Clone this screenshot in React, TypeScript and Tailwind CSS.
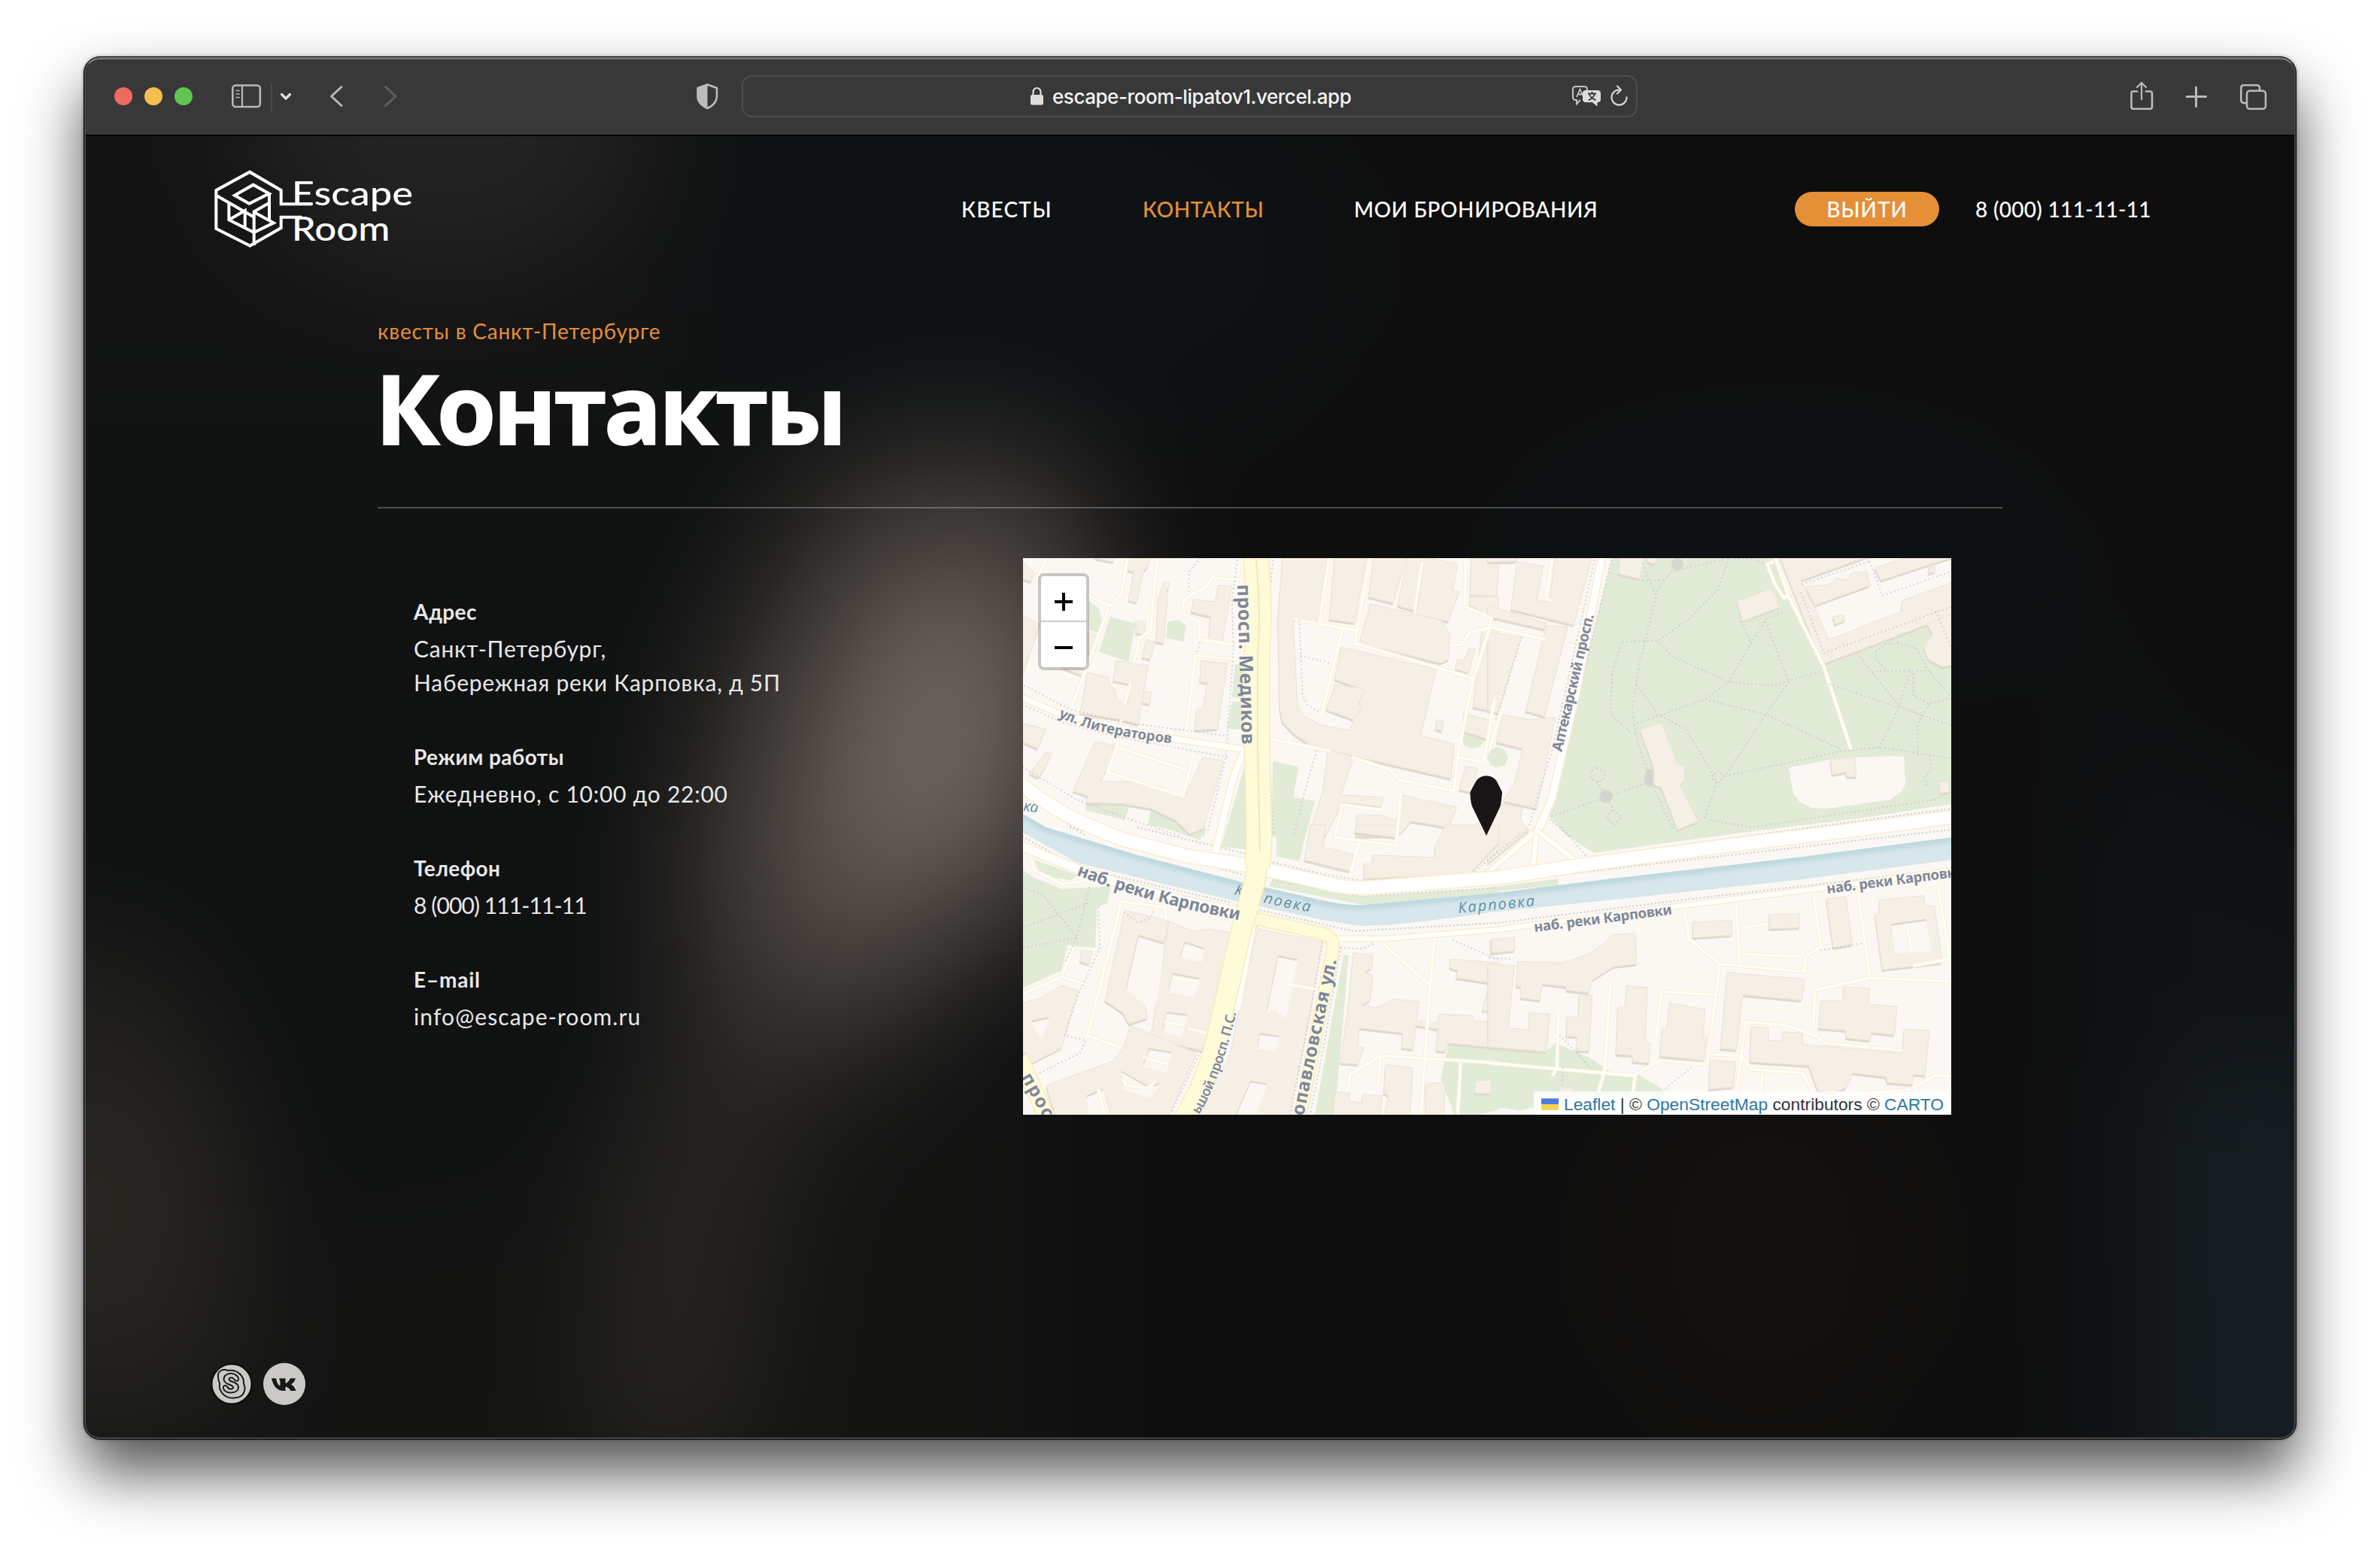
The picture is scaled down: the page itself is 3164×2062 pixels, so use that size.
import React from "react";

type Pt = string;

const BG = "#fbf8f4";
const BUILDING = "#f6efe6";
const GREEN = "#e1ebd6";

interface Tile {
  transform: string;
  greens: Pt[];
  clearings: Pt[];
  buildings: Pt[];
  courts: Pt[];
  roads: Pt[];
  dots: Pt[];
}

const northWest: Tile = {
  transform: "translate(-10 -12) scale(0.40816 0.33333)",
  greens: [
    "238,205 270,235 283,290 272,335 238,320",
    "308,270 390,298 368,450 272,410",
    "495,290 530,282 555,305 548,370 490,355",
    "715,460 740,460 745,600 705,590",
    "705,608 735,608 745,720 690,716",
    "838,845 922,868 905,990 975,1005 945,1145 835,1145",
    "745,870 760,1145 680,1145",
    "240,1000 372,1020 355,1080 225,1040",
    "440,1045 620,1110 615,1145 430,1100",
    "1450,735 1490,740 1535,755 1515,785 1488,797 1462,783",
  ],
  clearings: [],
  buildings: [
    "24,50 62,95 50,130 24,120",
    "24,265 80,300 30,480 24,500",
    "370,30 440,30 430,75 418,85 395,212 368,205 385,90 365,85",
    "250,30 322,30 320,52 270,40",
    "482,130 502,135 500,160 490,160 497,195 487,300 482,375 458,370 465,190 470,180",
    "392,285 425,290 418,340 392,335",
    "425,360 455,370 440,440 412,432",
    "660,145 705,148 675,365 628,360 635,270 572,250 580,200 650,210",
    "605,445 690,455 658,718 583,722 590,640 612,635 625,535 600,528",
    "328,445 432,465 400,700 345,680 210,655 235,492 300,510 310,545 325,560 330,605 365,615 378,540 318,525",
    "418,568 443,572 438,618 412,612",
    "258,768 333,785 278,925 400,930 480,950 550,990 610,828 678,845 612,1115 568,1135 520,1080 440,1035 350,1015 232,1012 235,985 187,965",
    "24,695 100,718 72,795 24,770",
    "100,808 118,815 95,875 75,912 45,895",
    "238,330 265,345 262,400 238,415",
    "145,470 225,480 220,505",
    "870,30 1015,30 985,290 915,275 905,290 918,620 940,665 990,700 1090,722 1135,560 1040,520 1060,390 1370,480 1320,745 1430,775 1418,915 1100,825 965,785 910,740 870,690 860,640 855,270",
    "1040,540 1138,558 1115,620 1130,630 1100,680 1012,640",
    "1040,30 1145,30 1105,295 1022,280",
    "1168,30 1275,30 1230,215 1150,190",
    "1278,30 1325,30 1298,245 1245,225",
    "1332,30 1440,60 1425,165 1445,170 1410,288 1308,260",
    "1155,218 1390,285 1415,345 1410,440 1385,455 1120,375",
    "1478,395 1498,398 1475,495 1432,478 1440,440 1462,440",
    "1485,30 1575,30 1568,188 1480,185",
    "1480,190 1575,190 1568,280 1480,225",
    "1520,318 1575,318 1568,650 1490,630",
    "1460,655 1550,685 1532,755 1455,725",
    "1372,680 1395,685 1390,725 1368,718",
    "1465,865 1505,875 1485,970 1445,960",
    "1018,800 1102,830 1060,980 1198,990 1190,1028 1065,1010 1010,1145 955,1145 1000,970",
    "1255,980 1438,1030 1410,1110 1290,1085 1245,1145 1108,1145 1112,1060 1190,1060 1240,1085",
  ],
  courts: [],
  roads: [
    "105,30 70,115",
    "365,30 345,180 305,230 180,640",
    "235,185 305,225",
    "462,30 440,325 405,355 385,455",
    "375,535 355,620",
    "345,680 330,790 300,890 545,985 590,770",
    "330,790 555,880",
    "738,125 640,112 620,155 565,185 545,215 550,260 598,290 600,360 735,385",
    "725,440 585,425 555,750",
    "1022,30 990,295",
    "1155,30 1105,380",
    "910,280 1110,325",
    "1065,320 995,665",
    "1105,375 1490,515",
    "1325,50 1300,245",
    "1465,30 1465,230 1550,275 1540,315 1480,330 1455,380 1415,385",
    "1545,315 1490,520 1440,830 1525,850 1560,600",
    "1440,830 1428,965 1250,920 1220,880 1095,830",
    "825,755 1025,805",
    "1255,975 1240,1180 1040,1150 1065,1020 1190,1040",
  ],
  dots: [
    "725,30 705,200 710,400 690,740 685,830 625,1130",
    "840,30 822,250 820,500 830,900 840,1145",
    "600,36 565,90 565,170",
    "30,545 180,640 350,690 690,745",
    "24,620 150,690 340,750 690,830",
    "925,285 935,580 950,620 990,650",
    "930,425 1025,455",
    "980,805 935,1000 905,1145",
    "600,375 590,415",
    "24,870 200,1000 400,1090 540,1145",
    "24,980 150,1080 230,1145",
  ],
};

const northEast: Tile = {
  transform: "translate(620 -12) scale(0.40816 0.33333)",
  greens: [
    "400,30 925,30 1085,465 1430,300 1440,340 1520,480 1520,1015 1200,1075 830,1130 340,1212 250,1140 190,1060",
    "27,788 48,798 62,830 50,862 27,872 5,862 -8,830 5,800",
  ],
  clearings: [
    "975,872 1130,835 1300,826 1350,828 1356,935 1340,970 1305,1000 1100,1035 1050,1032 1010,1008 990,975",
    "1060,235 1345,160 1345,245 1100,362",
  ],
  buildings: [
    "1110,843 1165,830 1190,830 1195,908 1165,908 1160,890 1117,900",
    "490,720 560,692 610,850 635,870 635,925 620,940 680,1085 612,1120 560,950 535,940 535,870",
    "805,208 920,157 945,232 825,288",
    "425,30 505,30 490,120 422,98",
    "510,30 545,30 538,60 515,50",
    "945,30 1235,30 1015,125 1060,235 1105,362 1340,250 1345,205 1515,130 1515,262 1430,298 1085,460",
    "1060,225 1240,145 1230,90 1180,95 1165,125 1130,115 1110,140 1030,150",
    "1255,75 1370,30 1515,30 1275,125",
    "1430,75 1450,70 1452,90 1430,98",
    "1118,270 1155,262 1158,285 1125,300",
    "1425,300 1515,255 1515,462 1475,470 1430,440 1415,390 1445,340",
    "1465,930 1495,925 1500,970 1468,972",
    "90,50 175,68 155,205 195,212 215,30 335,30 275,303 70,240",
    "-5,225 185,295 180,320 -5,268",
    "-5,30 95,30 85,50 -5,52",
    "185,305 255,312 180,668 118,645",
    "-5,330 103,352 30,655 -5,645",
    "45,660 130,680 215,670 155,1035 45,1005 80,940 108,795 22,770",
    "-5,1010 110,1030 100,1080 130,1120 -5,1255",
  ],
  courts: [],
  roads: [
    "205,30 185,200 205,205",
    "0,310 180,360",
    "250,380 290,390",
    "290,230 320,235",
    "0,800 40,640",
    "925,50 905,60 930,140 960,195 975,185",
    "930,30 975,190 1090,470 1178,800",
  ],
  dots: [
    "345,30 205,800 130,1100",
    "400,30 300,540 190,1070 260,1145",
    "105,352 20,680",
    "545,180 490,450 465,640 480,760 530,940 600,1120",
    "500,60 540,180 590,90 780,36 860,40 900,60",
    "500,125 570,125",
    "780,40 745,160 650,280 550,365 430,370 400,500 395,660 465,735",
    "550,370 600,430 780,530 920,545 1075,490",
    "480,540 550,660 640,720 720,880 740,930 700,1080",
    "470,700 700,600 780,530 850,380 900,280 960,250",
    "820,290 850,370",
    "900,290 975,530 900,660 770,900",
    "770,905 1150,805 1270,790 1510,835",
    "705,600 900,660 1150,800",
    "1110,540 1510,705",
    "1200,420 1330,620 1410,665",
    "1380,500 1380,580 1430,615 1510,595",
    "1330,375 1290,378 1258,410 1265,450 1300,485 1430,485",
    "1330,375 1390,395 1430,485 1510,600",
    "1370,490 1330,640 1270,790",
    "1430,620 1395,700 1395,820",
    "1435,825 1440,880 1415,910 1425,940",
    "1235,490 1300,485",
    "720,1080 850,1110 1450,1000 1510,960",
    "205,1065 520,930",
    "352,872 375,885 375,915 352,930 330,915 330,885 352,872 ",
    "352,930 380,988 405,1040 430,1070 405,1100 380,1070 405,1040",
    "745,885 765,905 745,935 722,910 745,885",
    "1015,175 1090,415 1515,225",
    "1235,36 1280,185 1515,85",
    "1020,140 1235,50",
    "1455,250 1510,410",
  ],
};

const southWest: Tile = {
  transform: "translate(-10 358) scale(0.40816 0.33333)",
  greens: [
    "24,170 60,200 150,245 310,235 300,300 265,320 260,480 170,470 150,570 24,640",
    "60,130 110,150 200,190 180,210 120,200 80,180",
    "1068,510 1085,510 1040,1150 975,1150",
    "1410,870 1575,880 1575,1125 1500,1150 1430,1150 1385,1000",
    "850,0 950,0 925,135 850,115",
    "688,0 750,0 755,88 670,78",
    "480,0 620,0 600,50",
    "840,205 1120,275 1575,240 1575,260 1130,308 825,235",
  ],
  clearings: [],
  buildings: [
    "500,375 580,415 630,405 700,420 620,895 440,840",
    "355,330 500,372 485,460 400,430 360,640 420,700 430,760 370,785 350,740 292,690",
    "790,405 1000,455 955,780 890,1150 595,1150 700,900 740,650",
    "150,630 205,650 150,880 45,945 24,900 24,700 85,680",
    "375,790 590,900 550,1010 500,1150 130,1150 100,1030 210,980 320,930 350,880",
    "215,490 250,495 240,545 210,535",
    "1100,500 1165,510 1160,560 1135,580 1165,590 1155,690 1128,710 1175,720 1230,685 1315,695 1305,770 1375,780 1380,745 1490,750 1495,770 1575,780 1575,880 1410,860 1400,895 1370,890 1375,805 1305,790 1295,885 1258,880 1260,820 1120,800 1115,870 1135,880 1115,945 1058,940 1085,700",
    "1415,525 1575,540 1575,735 1520,730 1545,620 1435,600 1440,570 1415,560",
    "1545,450 1575,450 1575,500 1548,500",
    "1205,945 1295,960 1285,1150 1200,1150 1215,1070 1200,1060",
    "1335,1020 1400,1020 1395,1150 1335,1150",
    "1040,1055 1090,1060 1085,1090 1130,1100 1130,1065 1195,1070 1190,1150 1035,1150",
    "1500,1010 1550,1010 1548,1060 1495,1060",
    "960,-10 1010,-10 1000,80 1045,90 1100,110 1090,175 990,145 940,130",
    "1110,-10 1245,-10 1240,40 1105,20",
    "1165,110 1368,120 1365,80 1400,-10 1575,-10 1575,60 1480,185 1135,205 1135,145 1160,145",
  ],
  courts: [
    "400,430 485,460 460,690 430,720 420,700 360,640",
    "550,455 615,480 605,530 538,512",
    "510,580 600,600 580,670 498,650",
    "490,735 560,745 540,830 480,810",
    "855,510 918,525 880,755 845,720 818,730",
    "795,820 858,830 848,885 788,875",
    "765,1010 818,1020 780,1150 715,1150",
    "50,770 110,755 85,835",
    "435,880 508,895 490,970 415,945",
    "345,970 430,1030 470,1020 440,1070 350,1040",
    "230,1070 285,1040 310,1150 240,1150",
  ],
  roads: [
    "490,370 490,320 345,295 235,830 345,880",
    "24,665 150,595 190,480",
    "150,595 235,630",
    "1190,455 1350,630",
    "1365,450 1350,630 1320,1150",
    "1190,910 1575,940",
    "1190,910 1090,985 1085,1030",
    "1190,910 1180,1030",
    "1450,940 1440,1150",
    "1120,60 1085,215",
    "1040,40 1230,70",
    "50,110 60,170 150,225 215,215",
    "415,915 495,945",
    "515,600 590,615",
    "485,775 550,790",
    "620,820 560,800",
    "880,625 980,645",
    "270,1045 290,1140",
    "350,1000 360,1030 430,1040 455,1015",
  ],
  dots: [
    "24,240 90,270 200,440 160,540",
    "240,240 200,440 24,480",
    "24,400 240,300",
    "270,320 275,480 200,680 160,830 230,850 210,900 70,985",
    "1000,460 960,740 895,1150",
    "1060,480 1010,830 960,1150",
    "785,400 700,730 600,900 510,1130",
    "355,340 400,380 440,360 450,330",
    "1060,480 1130,485 1170,460",
    "1425,450 1575,530",
    "840,140 1000,185 1160,220 1470,205 1575,90",
    "840,210 1120,275 1575,240",
    "30,900 120,1140",
  ],
};

const southEast: Tile = {
  transform: "translate(620 358) scale(0.40816 0.33333)",
  greens: [
    "-5,875 180,900 215,860 330,920 400,980 490,990 560,1040 575,1070 145,1070 145,1115 100,1130 40,1118 -5,1130",
    "-5,240 225,205 225,230 -5,258",
  ],
  clearings: [],
  buildings: [
    "8,445 82,440 82,492 8,500",
    "-5,545 82,550 62,800 128,808 130,738 198,745 185,895 -5,875",
    "92,535 240,540 330,500 390,445 400,428 475,422 480,545 405,555 335,610 325,660 252,650 250,635 172,625 165,690 102,680 102,635 88,632",
    "292,672 335,668 325,892 282,890 285,835 250,832 252,758 290,755",
    "447,632 515,638 508,855 523,860 520,940 467,935 465,910 412,905 418,715 442,715",
    "588,700 702,725 697,830 708,835 698,930 555,912 562,805 578,800",
    "662,378 790,370 790,430 662,440",
    "910,348 1010,345 1010,400 912,405",
    "1097,285 1162,275 1182,468 1120,480",
    "1270,290 1415,272 1420,312 1450,315 1475,540 1280,568 1255,345 1270,345",
    "775,578 1027,605 1017,690 825,668 805,888 752,882",
    "852,795 910,800 910,850 955,850 955,815 1020,820 1020,865 1345,900 1350,805 1433,810 1420,990 1380,985 1378,1025 1295,1018 1290,995 1185,980 1160,1040 1120,1058 1070,1050 1040,950 848,935",
    "1155,635 1238,642 1235,705 1328,715 1320,828 1245,818 1240,850 1162,840 1160,810 1072,802 1080,690 1150,692",
    "718,928 803,935 795,1035 715,1045",
    "230,1035 272,1040 270,1070 228,1070",
  ],
  courts: ["1308,385 1422,365 1440,485 1320,495"],
  roads: [
    "635,330 650,445 750,545 710,945 555,930 470,990 0,940",
    "805,305 815,545",
    "820,400 905,385",
    "820,505 1010,515",
    "750,545 1025,575 1030,515 1080,475 1055,265",
    "1200,255 1240,600 1515,615",
    "1240,600 1060,650 1055,795",
    "1460,225 1500,525 1380,552",
    "1360,385 1375,490",
    "560,655 735,668",
    "560,655 545,830",
    "720,905 820,910 805,1055",
    "820,910 835,775 970,790 1060,830 1095,860 1345,890",
    "820,910 855,965 1020,980 1050,1050",
    "890,980 885,1055",
    "225,735 220,960 205,990",
    "395,620 375,975 355,1055",
    "475,990 468,1055",
    "1210,1060 1370,1045 1450,990 1515,990",
  ],
  dots: ["230,830 330,960", "240,960 235,1040", "575,1040 660,955", "1080,490 1215,462", "0,520 70,525", "-5,130 130,0", "235,0 320,120"],
};

const tiles = [northWest, northEast, southWest, southEast];

const NS = { vectorEffect: "non-scaling-stroke" as const };

const RIVER =
  "M-2,339 L31,358 L153,395 L292,431 L398,455 Q430,462 451,461 L630,445 L783,426 L1028,398 L1236,371 L1236,401 L1028,428 L824,450 L620,471 Q480,492 440,488 L398,481 L292,458 L194,435 L72,405 L-2,364 Z";
const RIVER_TOP = "M-2,341 L31,360 L153,397 L292,433 L398,457 Q430,464 451,463 L630,447 L783,428 L1028,400 L1236,373";
const EMBANKMENT =
  "M-4,298 Q40,340 133,374 L218,396 L296,408 L398,431 Q430,440 460,438 L630,425 L742,408 L946,381 L1069,366 L1238,344";

interface RoadProps {
  d: string;
  w: number;
  fill?: string;
  casing?: string;
}

function Road({ d, w, fill = "#ffffff", casing = "#fbedcd" }: RoadProps) {
  return (
    <g fill="none" strokeLinejoin="round">
      <path d={d} stroke={casing} strokeWidth={w + 3} />
      <path d={d} stroke={fill} strokeWidth={w} />
    </g>
  );
}

function CityMap() {
  return (
    <svg viewBox="0 0 1234 740" className="block h-[740px] w-[1234px]">
      <defs>
        <path id="lit" d="M47,211 Q100,236 205,247" />
        <path id="nab" d="M71,421 Q160,457 292,482" />
        <path id="bolsh" d="M234,740 Q264,690 284,602" />
        <path id="petr" d="M373,742 L392,650 L418,530" />
        <path id="kar1" d="M280,447 Q330,462 385,471" />
        <filter id="soft" x="-5%" y="-20%" width="110%" height="140%">
          <feGaussianBlur stdDeviation="3" />
        </filter>
        <clipPath id="riverClip">
          <path d={RIVER} />
        </clipPath>
      </defs>
      <rect width="1234" height="740" fill={BG} />
      {tiles.map((t) => (
        <g key={t.transform} transform={t.transform}>
          {t.greens.map((p) => (
            <polygon key={p} points={p} fill={GREEN} />
          ))}
          {t.clearings.map((p) => (
            <polygon key={p} points={p} fill={BG} />
          ))}
        </g>
      ))}
      <g fill="#d3d8cd">
        <circle cx="775" cy="317" r="9" />
        <circle cx="870" cy="8" r="8" />
        <ellipse cx="833" cy="292" rx="7" ry="12" />
      </g>
      <path d={RIVER} fill="#d7e7ec" />
      <g clipPath="url(#riverClip)">
        <path d={RIVER_TOP} fill="none" stroke="#b9d5de" strokeWidth="8" filter="url(#soft)" />
      </g>
      {tiles.map((t) => (
        <g key={t.transform} transform={t.transform}>
          <g fill="#e0d9ce" transform="translate(-2 9)">
            {t.buildings.map((p) => (
              <polygon key={p} points={p} />
            ))}
          </g>
          <g fill={BUILDING} stroke="#ebe3d8" strokeWidth="1">
            {t.buildings.map((p) => (
              <polygon key={p} points={p} style={NS} />
            ))}
          </g>
          {t.courts.map((p) => (
            <g key={p}>
              <polygon points={p} fill="#e0d9ce" />
              <polygon points={p} fill={BG} transform="translate(1 8)" />
            </g>
          ))}
        </g>
      ))}
      {tiles.map((t) => (
        <g key={t.transform} transform={t.transform} fill="none" strokeLinejoin="round">
          {t.roads.map((p) => (
            <polyline key={p} points={p} stroke="#fbf0d8" strokeWidth="5.5" style={NS} />
          ))}
          {t.roads.map((p) => (
            <polyline key={p} points={p} stroke="#fffef8" strokeWidth="3.4" style={NS} />
          ))}
          {t.dots.map((p) => (
            <polyline key={p} points={p} stroke="#c9cbd3" strokeOpacity="0.75" strokeWidth="2.4" strokeLinecap="round" strokeDasharray="0 5.4" style={NS} />
          ))}
        </g>
      ))}
      <g fill="none" stroke="#cfd0d6" strokeWidth="2.4" strokeLinecap="round" strokeDasharray="0 5">
        <path d="M63,358 L292,421" />
        <path d="M0,370 L72,411 L276,458" />
        <path d="M316,468 L439,496 L630,485 L865,456 L1234,413" />
        <path d="M620,433 L783,413 L1234,361" />
        <path d="M750,398 L987,366 L1234,333" />
        <path d="M153,358 L296,393" />
      </g>
      <g fill="#5f8fa3" fontFamily="'Open Sans','Noto Sans',sans-serif" fontStyle="italic" fontSize="20">
        <text>
          <textPath href="#kar1" textLength="104">Карповка</textPath>
        </text>
        <text transform="translate(579 472) rotate(-5.5)" textLength="102">
          Карповка
        </text>
        <text transform="translate(0 336) rotate(6)" textLength="20">
          ка
        </text>
      </g>
      <Road d="M-4,184 L51,208 L153,231 L218,243 L298,255" w={7} />
      <Road d="M294,258 Q284,275 276,305 L255,395" w={8} />
      <Road d="M-4,382 L72,413 Q160,447 292,471" w={11} />
      <Road d="M410,506 L480,506 L630,494 L885,461 L1069,438 L1238,415" w={6} />
      <Road d="M770,-4 L735,180 L703,320 L683,366" w={9} />
      <Road d="M683,362 L616,420" w={6} />
      <Road d="M683,362 L677,420" w={6} />
      <Road d="M683,362 L742,408" w={6} />
      <Road d={EMBANKMENT} w={17} />
      <Road d="M306,480 L284,600" w={9} />
      <Road d="M308,479 L398,499 Q414,503 412,520 L398,591 L368,745" w={15} fill="#fefbd9" casing="#faeaba" />
      <Road d="M309,-4 Q316,60 311,130 L311,250 L314,368 Q314,400 308,430 L289,500 L262,620 Q248,690 214,745" w={26} fill="#fefbd9" casing="#faeaba" />
      <Road d="M309,-4 Q316,60 311,130 L311,250 L314,368 Q314,395 311,410" w={32} fill="#fefbd9" casing="#faeaba" />
      <path d="M309,-4 Q317,60 312,130 L312,250 L315,390" fill="none" stroke="#f8e6b4" strokeWidth="2" />
      <Road d="M-4,665 L32,745" w={20} fill="#fefbd9" casing="#faeaba" />
      <g fill="#7f8797" fontFamily="'Noto Sans','Open Sans',sans-serif" fontWeight="700" stroke="#fbf8f4" strokeWidth="1.2" paintOrder="stroke">
        <text transform="translate(285 35) rotate(88.4)" fontSize="25" textLength="213">
          просп. Медиков
        </text>
        <text fontSize="18.500">
          <textPath href="#lit" textLength="155">ул. Литераторов</textPath>
        </text>
        <text fontSize="22.500">
          <textPath href="#nab" textLength="225">наб. реки Карповки</textPath>
        </text>
        <text transform="translate(716 258) rotate(-76.7)" fontSize="19" textLength="187">
          Аптекарский просп.
        </text>
        <text transform="translate(680 497) rotate(-7.3)" fontSize="18.500" textLength="185">
          наб. реки Карповки
        </text>
        <text transform="translate(1069 446) rotate(-7.3)" fontSize="18.500" textLength="185">
          наб. реки Карповки
        </text>
        <text fontSize="24">
          <textPath href="#petr" textLength="212">опавловская ул.</textPath>
        </text>
        <text fontSize="18" fontWeight="600">
          <textPath href="#bolsh" textLength="145">ьшой просп. П.С.</textPath>
        </text>
        <text transform="translate(-3 690) rotate(61)" fontSize="24" textLength="64">
          прос
        </text>
      </g>
      <path
        d="M616,289.500 C622,289.500 627,292 630,297 L637,311 Q636,324 634.500,330 L616,369 L597,330 Q594.500,322 594.500,311 L602,297 C605,292 610,289.500 616,289.500 Z"
        fill="#1a1516"
      />
    </svg>
  );
}

function Backdrop() {
  return (
    <svg viewBox="0 0 2938 1731" className="absolute inset-0 h-full w-full" preserveAspectRatio="none">
      <defs>
        <filter id="haze" filterUnits="userSpaceOnUse" x="0" y="0" width="2938" height="1731" colorInterpolationFilters="sRGB">
          <feGaussianBlur stdDeviation="80" />
        </filter>
      </defs>
      <rect width="2938" height="1731" fill="#101111" />
      <g filter="url(#haze)">
        <rect x="-400" y="-400" width="3738" height="2531" fill="#101212" />
        <rect x="1300" y="-400" width="2038" height="2531" fill="#0e0e0e" />
        <rect x="-400" y="-400" width="1200" height="760" fill="#141414" />
        <ellipse cx="480" cy="-20" rx="260" ry="200" fill="#232323" />
        <ellipse cx="1250" cy="160" rx="420" ry="260" fill="#0e1214" />
        <ellipse cx="2250" cy="560" rx="360" ry="160" fill="#0e1114" />
        <path d="M-400,1080 L80,1060 Q280,1300 220,1731 L-400,1800 Z" fill="#1f1e1b" />
        <ellipse cx="20" cy="1420" rx="150" ry="200" fill="#292622" />
        <path d="M300,1450 L1300,1250 L1300,2100 L300,2100 Z" fill="#141413" />
        <path d="M2500,500 L2700,700 L2680,1731 L2800,2100 L3338,2100 L3338,1150 L2800,900 Z" fill="#101417" />
        <path d="M2740,1250 Q2900,1150 3338,1450 L3338,2100 L2760,2100 Z" fill="#161c20" />
        <ellipse cx="2230" cy="1480" rx="200" ry="240" fill="#13110f" />
        <path d="M790,1150 L980,1220 L900,1480 L860,1760 L680,1760 L700,1400 Z" fill="#272523" />
        <path d="M870,620 L980,440 Q1150,320 1330,440 L1400,600 L1330,1050 L1200,1110 L1050,1250 Q860,1280 790,1120 Q760,900 870,620 Z" fill="#322e2b" />
        <path d="M990,620 Q1090,480 1240,520 L1310,620 L1280,960 L1140,1060 Q990,1180 890,1060 Q870,820 990,620 Z" fill="#514a46" />
        <path d="M1060,680 Q1130,570 1220,630 L1250,880 L1120,960 Q1030,1010 1000,920 Z" fill="#6e6661" />
      </g>
    </svg>
  );
}

function Toolbar() {
  const s = { fill: "none", stroke: "#b9b9b9", strokeWidth: 2.6, strokeLinecap: "round" as const, strokeLinejoin: "round" as const };
  return (
    <div className="flex h-[105px] shrink-0 items-center border-b-2 border-black bg-[#383838] pl-[40px]">
      <div className="flex gap-[16px]">
        <span className="h-6 w-6 rounded-full bg-[#ed6a5e]" />
        <span className="h-6 w-6 rounded-full bg-[#f5bf4f]" />
        <span className="h-6 w-6 rounded-full bg-[#61c554]" />
      </div>
      <svg className="ml-[51px] h-[40px] w-[230px]" viewBox="307 107 230 40">
        <g {...s}>
          <rect x="309.300" y="112.500" width="36.500" height="28.500" rx="4" />
          <path d="M322,113 V141" strokeWidth="2.200" />
          <path d="M314,119.500 H318 M314,124 H318 M314,128.500 H318" strokeWidth="1.600" />
          <path d="M361,110 V146" stroke="#4d4d4d" strokeWidth="1.800" />
          <path d="M374.500,124.500 L380,130 L385.500,124.500" stroke="#e0e0e0" strokeWidth="3.200" />
          <path d="M454,114.500 L440.500,127 L454,139.500" strokeWidth="3" />
          <path d="M512.500,114.500 L526,127 L512.500,139.500" strokeWidth="3" stroke="#5f5f5f" />
        </g>
      </svg>
      <svg className="ml-[387px] h-[36px] w-[32px]" viewBox="925 110 32 36">
        <path d="M941.500,112.500 L954,117 V128 C954,136 949,140.500 941.500,144 C934,140.500 928.500,136 928.500,128 V117 Z" fill="none" stroke="#bcbcbc" strokeWidth="2.600" strokeLinejoin="round" />
        <path d="M941.500,112 L928,117 V128 C928,136 934,141 941.500,144 Z" fill="#bcbcbc" />
      </svg>
      <div className="ml-[30px] flex h-[56px] w-[1191px] items-center justify-end rounded-[14px] border-2 border-[#4d4d4d]">
        <svg className="h-[26px] w-[20px]" viewBox="0 0 20 26">
          <rect x="1" y="11" width="17" height="13.500" rx="2.500" fill="#dedede" />
          <path d="M4.500,12 V7.500 A5,5.500 0 0 1 14.500,7.500 V12" fill="none" stroke="#dedede" strokeWidth="2.200" />
        </svg>
        <span className="ml-[10px] w-[400px] whitespace-nowrap pt-[2px] font-['Inter',sans-serif] text-[26px] font-medium tracking-[-0.45px] text-[#f4f4f4]">
          escape-room-lipatov1.vercel.app
        </span>
        <svg className="mr-[7px] ml-[289px] h-[34px] w-[80px]" viewBox="2088 110 80 34">
          <path d="M2094,114 H2106 Q2110,114 2110,118 V120 M2101,132 L2096,137 V132 H2095 Q2091,132 2091,128 V118 Q2091,114 2095,114" fill="none" stroke="#c4c4c4" strokeWidth="2" />
          <path d="M2096,128 L2100.500,117.500 L2104,126 M2097.500,124.500 H2103" fill="none" stroke="#c4c4c4" strokeWidth="1.800" />
          <path d="M2108,119 H2124 Q2128,119 2128,123 V131 Q2128,135 2124,135 H2123.500 V140.500 L2117,135 H2108 Q2104,135 2104,131 V123 Q2104,119 2108,119 Z" fill="#dcdcdc" />
          <path d="M2111,123.500 H2122 M2116.500,121 V124 M2120,124 Q2118,130 2112,132 M2113,124.500 Q2115,130 2121.500,132" fill="none" stroke="#383838" strokeWidth="1.900" />
          <path d="M2153,118.500 A10,10 0 1 0 2162.500,128.500 M2150,113.500 L2155,118.500 L2150,123.500" fill="none" stroke="#d0d0d0" strokeWidth="2.300" strokeLinecap="round" strokeLinejoin="round" />
        </svg>
      </div>
      <svg className="ml-[652px] h-[44px] w-[190px]" viewBox="2829 104 190 44">
        <g {...s}>
          <path d="M2841,119.500 H2836 Q2833.500,119.500 2833.500,122 V140 Q2833.500,142.700 2836,142.700 H2858 Q2861,142.700 2861,140 V122 Q2861,119.500 2858,119.500 H2853" />
          <path d="M2847,130 V109 M2841,114 L2847,108 L2853,114" strokeWidth="2.300" />
          <path d="M2919.500,114 V139.500 M2907,126.500 H2932.500" strokeWidth="3" />
          <rect x="2987" y="118.700" width="25" height="24" rx="4" />
          <path d="M2986,135 H2984 Q2979.300,135 2979.300,131 V115 Q2979.300,111.300 2983,111.300 H3000 Q3004,111.300 3004,115 V118" />
        </g>
      </svg>
    </div>
  );
}

function Logo() {
  return (
    <svg className="h-[110px] w-[270px]" viewBox="550 490 810 330">
      <g fill="none" stroke="#fff" strokeWidth="12" strokeLinejoin="miter">
        <path d="M945,635 H822 V580 L697,507 L563,580 V733 L698,801 L822,730 V687 H905" />
        <path d="M563,600 L712,686 M714,800 V665 L775,630" />
        <path d="M637,600 L711,558 L774,593 L695,633 Z" />
        <path d="M775,590 V697 M714,667 L792,710 L714,748 L614,698 V632 M614,698 L678,661 V728" />
      </g>
      <g fill="#fff" fontFamily="'Lato',sans-serif" fontSize="132" fontWeight="500">
        <text x="864" y="639" textLength="484" lengthAdjust="spacingAndGlyphs">Escape</text>
        <text x="864" y="780" textLength="392" lengthAdjust="spacingAndGlyphs">Room</text>
      </g>
    </svg>
  );
}

const contacts = [
  { title: "Адрес", lines: ["Санкт-Петербург,", "Набережная реки Карповка, д 5П"], titleClass: "tracking-[0.4px]", lineClass: "tracking-[0.75px]" },
  { title: "Режим работы", lines: ["Ежедневно, с 10:00 до 22:00"], titleClass: "tracking-[0.4px]", lineClass: "tracking-[0.75px]" },
  { title: "Телефон", lines: ["8 (000) 111-11-11"], titleClass: "tracking-[0.4px]", lineClass: "tracking-[-0.9px]" },
  { title: "E–mail", lines: ["info@escape-room.ru"], titleClass: "tracking-[0.8px]", lineClass: "tracking-[1.1px]" },
];

export default function App() {
  return (
    <div className="flex h-[2062px] w-[3164px] items-start overflow-hidden bg-white pt-[75px] pl-[111px]">
      <div className="flex h-[1839px] w-[2942px] flex-col overflow-hidden rounded-[22px] border border-black bg-[#101111] font-['Lato','Open_Sans',sans-serif] text-white shadow-[0_44px_80px_rgba(0,0,0,0.68),0_0_4px_rgba(0,0,0,0.4)]">
        <div className="relative flex h-full flex-col">
          <Toolbar />
          <div className="relative flex-1 overflow-hidden">
            <Backdrop />
            <div className="relative flex h-full flex-col">
              <header className="flex h-[194px] shrink-0 items-center pl-[171px]">
                <Logo />
                <nav className="ml-[725px] flex items-center text-[28px] font-medium">
                  <a className="w-[241px] tracking-[1.2px]">КВЕСТЫ</a>
                  <a className="w-[281px] tracking-[0.6px] text-[#e58f37]">КОНТАКТЫ</a>
                  <a className="w-[586px] tracking-[0.6px]">МОИ БРОНИРОВАНИЯ</a>
                </nav>
                <button className="flex h-[46px] w-[192px] items-center justify-center rounded-full bg-[#e58f37] text-[28px] font-medium tracking-[0.9px]">ВЫЙТИ</button>
                <span className="ml-[48px] text-[28px] font-medium tracking-[0.3px]">8 (000) 111-11-11</span>
              </header>
              <main className="ml-[390px] w-[2160px]">
                <p className="mt-[45px] text-[28px] leading-[40px] tracking-[0.8px] text-[#e58f37]">квесты в Санкт-Петербурге</p>
                <h1 className="mt-[8px] -ml-[3px] font-['Open_Sans',sans-serif] text-[127px] leading-[148px] font-bold tracking-[-3.6px] [-webkit-text-stroke:2px_white]">Контакты</h1>
                <div className="mt-[58px] h-[2px] bg-white/25" />
                <div className="flex pt-[66px] pl-[48px]">
                  <dl className="w-[810px] pt-[49px] text-[#e8e8e8]">
                    {contacts.map((c) => (
                      <div key={c.title} className="mb-[54px]">
                        <dt className={"text-[28px] leading-[45px] font-bold " + c.titleClass}>{c.title}</dt>
                        <dd className="pt-[4px] text-[30px] leading-[45px]">
                          {c.lines.map((l) => (
                            <div key={l} className={c.lineClass}>{l}</div>
                          ))}
                        </dd>
                      </div>
                    ))}
                  </dl>
                  <div className="relative h-[740px] w-[1234px] overflow-hidden">
                    <CityMap />
                    <div className="absolute top-[20px] left-[20px] rounded-[8px] border-4 border-black/20 bg-clip-padding">
                      <div className="flex h-[61px] w-[60px] items-center justify-center rounded-t-[5px] border-b-2 border-[#ccc] bg-white pt-[8px]">
                        <svg viewBox="0 0 26 26" className="h-[26px] w-[26px]">
                          <path d="M13,1 V25 M1,13 H25" stroke="#000" strokeWidth="4" />
                        </svg>
                      </div>
                      <div className="flex h-[60px] w-[60px] items-center justify-center rounded-b-[5px] bg-white pt-[7px]">
                        <svg viewBox="0 0 26 26" className="h-[26px] w-[26px]">
                          <path d="M1,13 H25" stroke="#000" strokeWidth="4" />
                        </svg>
                      </div>
                    </div>
                    <div className="absolute right-0 bottom-0 flex h-[31px] items-center bg-white/80 px-[10px] pt-[3px] font-['Liberation_Sans',sans-serif] text-[22.8px] whitespace-pre text-[#333]">
                      <svg viewBox="0 0 24 16" className="mr-[7px] h-[16px] w-[23px]">
                        <rect width="24" height="8" fill="#4c7be1" />
                        <rect y="8" width="24" height="8" fill="#f5d24a" />
                      </svg>
                      <span className="text-[#2f76a6]">Leaflet</span> | © <span className="text-[#2f76a6]">OpenStreetMap</span> contributors © <span className="text-[#2f76a6]">CARTO</span>
                    </div>
                  </div>
                </div>
              </main>
              <footer className="mt-auto mb-[45px] ml-[168px] flex items-center gap-[14px]">
                <svg viewBox="0 0 56 56" className="h-[56px] w-[56px]">
                  <circle cx="28" cy="28" r="26.500" fill="#cbc9c6" stroke="#0a0a0a" strokeWidth="2" />
                  <g fill="none" stroke="#1b1b1b" strokeWidth="2">
                    <path d="M10,18 C9,11 16,7 23,10 C35,8 45,17 44,28 C48,36 43,46 34,46 C22,49 10,40 12,27 Q10,23 10,18 Z" />
                    <path d="M37,21 C35,11 17,12 17.500,22 C18,29.500 30,28 30,32.500 C30,35.500 24,35.500 22.500,32 C20.500,28.500 15.500,30 17,34 C19,42 37,41.500 37,32 C36.500,24 24,26 24.500,21.500 C25,18.500 29.500,19 31,21.500 C33,25 37.500,24.500 37,21 Z" />
                  </g>
                </svg>
                <svg viewBox="0 0 56 56" className="h-[56px] w-[56px]">
                  <circle cx="28" cy="28" r="28" fill="#cbc9c6" />
                  <path
                    d="M27.500,37 C18,37 13.500,31 11,20.500 H17 C18,26.500 20,29.500 22.500,30.500 V24.500 L21,20.500 H29.500 V27 C32,26.500 34.500,23.500 36,20.500 H43 C42,24 39.500,27 37,28.500 C40,30 42,33 43.500,37 H36.500 C35,34 32.500,32 29.500,31.500 V37 Z"
                    fill="#171717"
                  />
                </svg>
              </footer>
            </div>
          </div>
          <div className="pointer-events-none absolute inset-0 rounded-[21px] border-2 border-t-[3px] border-[#474747] border-t-[#767676]" />
        </div>
      </div>
    </div>
  );
}
